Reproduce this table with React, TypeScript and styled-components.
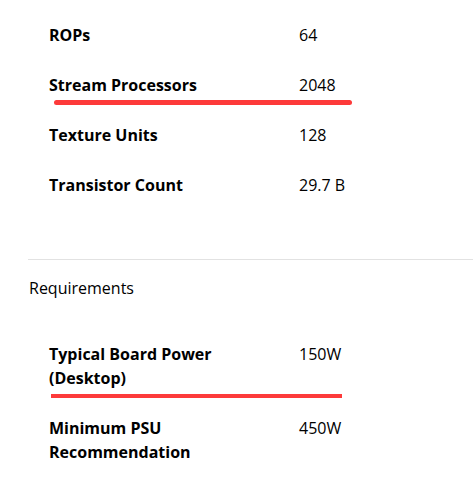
import React from "react";
import styled, { createGlobalStyle } from "styled-components";

const Global = createGlobalStyle`
  html, body { margin: 0; padding: 0; background: #fff; }
  body { font-family: "Open Sans", "Noto Sans", sans-serif; color: #000; }
`;

const Page = styled.div`
  width: 473px;
  padding: 10px 0 0 28px;
  box-sizing: border-box;
`;

const List = styled.div`
  display: flex;
  flex-direction: column;
  padding-left: 21px;
`;

const Row = styled.div`
  position: relative;
  display: grid;
  grid-template-columns: 200px auto;
  column-gap: 50px;
  padding: 13px 0;
  font-size: 16px;
  line-height: 24px;
`;

const Label = styled.div`
  font-weight: 700;
`;

const Value = styled.div`
  font-weight: 400;
`;

const Mark = styled.span<{ $left: number; $width: number; $bottom: number; $h: number; $round?: boolean }>`
  position: absolute;
  left: ${(p) => p.$left}px;
  width: ${(p) => p.$width}px;
  bottom: ${(p) => p.$bottom}px;
  height: ${(p) => p.$h}px;
  background: #fd3a3a;
  border-radius: ${(p) => (p.$round ? "3px" : "0")};
`;

const Divider = styled.hr`
  border: none;
  border-top: 1px solid #e2e2e2;
  margin: 49px 0 0 0;
`;

const Heading = styled.div`
  font-size: 16px;
  line-height: 24px;
  padding: 16px 0 29px 1px;
`;

type Spec = { label: string; value: string; mark?: { left: number; width: number; bottom: number; h: number; round?: boolean } };

const specs: Spec[] = [
  { label: "ROPs", value: "64" },
  { label: "Stream Processors", value: "2048", mark: { left: 5, width: 298, bottom: 5, h: 5, round: true } },
  { label: "Texture Units", value: "128" },
  { label: "Transistor Count", value: "29.7 B" },
];

const reqs: Spec[] = [
  { label: "Typical Board Power (Desktop)", value: "150W", mark: { left: 2, width: 291, bottom: 5, h: 4 } },
  { label: "Minimum PSU Recommendation", value: "450W" },
];

const SpecRow = ({ s }: { s: Spec }) => (
  <Row>
    <Label>{s.label}</Label>
    <Value>{s.value}</Value>
    {s.mark && <Mark $left={s.mark.left} $width={s.mark.width} $bottom={s.mark.bottom} $h={s.mark.h} $round={s.mark.round} />}
  </Row>
);

export default function App() {
  return (
    <Page>
      <Global />
      <List>
        {specs.map((s) => (
          <SpecRow key={s.label} s={s} />
        ))}
      </List>
      <Divider />
      <Heading>Requirements</Heading>
      <List>
        {reqs.map((s) => (
          <SpecRow key={s.label} s={s} />
        ))}
      </List>
    </Page>
  );
}
